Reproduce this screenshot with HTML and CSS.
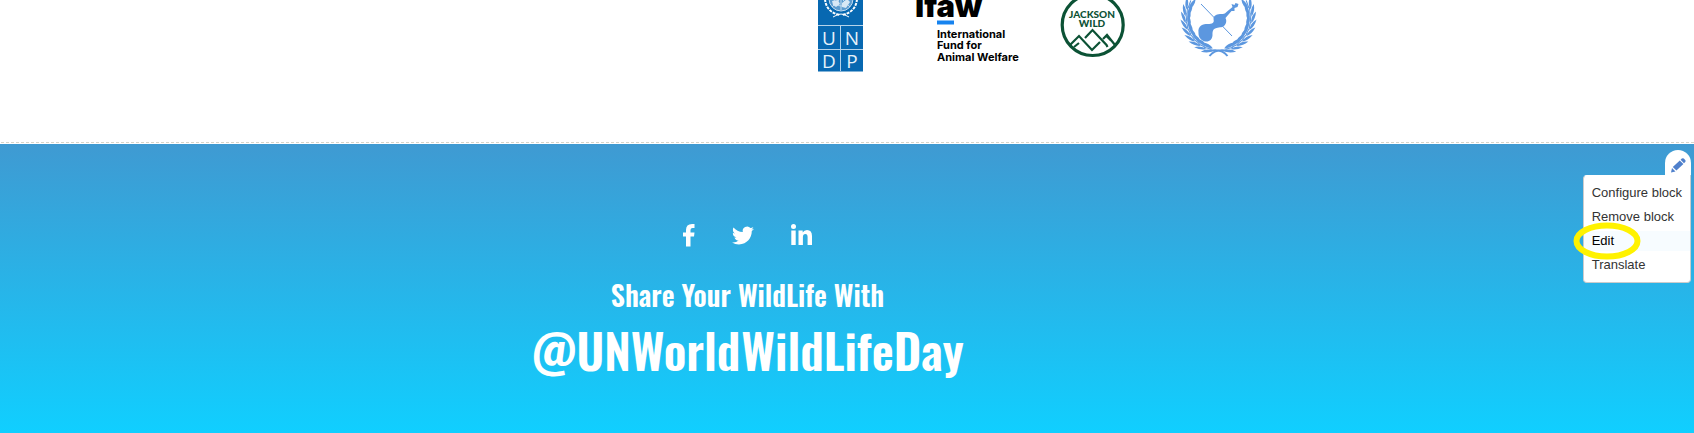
FILE: index.html
```html
<!DOCTYPE html>
<html lang="en">
<head>
<meta charset="utf-8">
<title>World Wildlife Day</title>
<link rel="stylesheet" href="styles.css">
</head>
<body>
<main class="partners">
  <svg class="logo" width="45" height="76" viewBox="818 0 45 76" role="img" aria-label="UNDP">
    <path fill="#0768b1" d="M818 0h45v71.500h-45z"/>
    <g fill="none" stroke="#c3dbef">
      <circle cx="841" cy="-1" r="12" fill="#5b9bcf"/>
      <circle cx="841" cy="-1" r="7"/>
      <path d="M841 0v10M841-2l9 9M841-2l-9 9"/>
      <path stroke="#fff" stroke-width="2" stroke-dasharray="3 1" d="M825-1q1 13 15 16M857-1q-1 13-15 16"/>
      <path stroke="#fff" d="M833 17q5-3 8-3t8 3"/>
      <path fill="#d8e8f5" stroke="none" d="M832 1l6-1 2 4-4 3-3-2zM842 3l5-4 3 3-4 6-4-1z"/>
    </g>
    <path stroke="#b5d3ea" d="M818 25.500h45M818 49.500h45M840.500 25v46"/>
    <g class="undp-letters"><text x="829" y="45">U</text><text x="852" y="45">N</text><text x="829" y="68">D</text><text x="852" y="68">P</text></g>
  </svg>
  <svg class="logo" width="117" height="76" viewBox="903 0 117 76" role="img" aria-label="ifaw International Fund for Animal Welfare">
    <text class="ifaw-name" x="915" y="17">ifaw</text>
    <path fill="#1683ef" d="M937 20.500h17v4h-17z"/>
    <g class="ifaw-text"><text x="937" y="38">International</text><text x="937" y="49">Fund for</text><text x="937" y="61">Animal Welfare</text></g>
  </svg>
  <svg class="logo" width="66" height="76" viewBox="1060 0 66 76" role="img" aria-label="Jackson Wild">
    <g fill="none" stroke="#0c5235">
      <circle cx="1092.700" cy="25" r="30.500" stroke-width="3.200"/>
      <path stroke-width="2.200" d="M1070 45l9-9 13 14 8-8M1074 47l5-4M1085 38l7.500-8 14 15 1 2M1103 39l4-4 8 10M1106 35.500l5 5"/>
    </g>
    <g class="jackson-text"><text x="1092" y="18">JACKSON</text><text x="1092" y="27">WILD</text></g>
  </svg>
  <svg class="logo" width="92" height="76" viewBox="1166 0 92 76" role="img" aria-label="Violin in a laurel wreath">
    <defs>
      <path id="leaves" d="M3 33q-4 4-12 4q5-5 12-4zM2 31q-5-5-12-3q5 4.500 12 3zM1 31.500h-8v1h8z"/>
      <g id="branch">
        <use href="#leaves" transform="rotate(14)"/><use href="#leaves" transform="rotate(26)"/>
        <use href="#leaves" transform="rotate(38)"/><use href="#leaves" transform="rotate(50)"/>
        <use href="#leaves" transform="rotate(62)"/><use href="#leaves" transform="rotate(74)"/>
        <use href="#leaves" transform="rotate(86)"/><use href="#leaves" transform="rotate(98)"/>
        <use href="#leaves" transform="rotate(110)"/>
        <path fill="none" stroke="#5c97df" stroke-width="2" d="M-10 33Q3 30 9 38"/>
      </g>
    </defs>
    <g fill="#5c97df">
      <use href="#branch" transform="translate(1218.500 18)"/>
      <use href="#branch" transform="translate(1218.500 18) scale(-1 1)"/>
      <path d="M1198.500 33c-1-8 5-9 9-9 5 0 7-1 6-5 0-4 4-5 8-5 2 0 3 0 5-2l6-5-1-3 3 1 1-2 3 1-1 3-3 1 0 3-3 0-6 7c1 2 1 4 0 6-2 4-6 3-9 4-4 1-4 4-4 7 0 4-3 7-7 6.500-4-.5-7-4-7-8z"/>
    </g>
    <path stroke="#5c97df" d="M1201 4l31 32"/>
  </svg>
</main>
<footer class="share">
  <nav class="social" aria-label="Social media">
    <a href="#" aria-label="Facebook"><svg width="12" height="23" viewBox="0 0 12 23"><path d="M3 22.500V12.500H0V8.500h3V6q0-6 6-6h2.500v4H9.500Q7.500 4 7.500 6v2.500h4l-.5 4H7.500v10z"/></svg></a>
    <a href="#" aria-label="Twitter"><svg width="22" height="23" viewBox="0 0 24 24"><path d="M23.953 4.570a10 10 0 01-2.825.775 4.958 4.958 0 002.163-2.723c-.951.555-2.005.959-3.127 1.184a4.920 4.920 0 00-8.384 4.482C7.690 8.095 4.067 6.130 1.640 3.162a4.822 4.822 0 00-.666 2.475c0 1.710.870 3.213 2.188 4.096a4.904 4.904 0 01-2.228-.616v.060a4.923 4.923 0 003.946 4.827 4.996 4.996 0 01-2.212.085 4.936 4.936 0 004.604 3.417 9.867 9.867 0 01-6.102 2.105c-.390 0-.779-.023-1.170-.067a13.995 13.995 0 007.557 2.209c9.053 0 13.998-7.496 13.998-13.985 0-.210 0-.420-.015-.630A9.935 9.935 0 0024 4.590z"/></svg></a>
    <a href="#" aria-label="LinkedIn"><svg width="21" height="23" viewBox="0 0 21 23"><circle cx="2.500" cy="2.500" r="2.500"/><path d="M.3 6.500h4.400v14.500H.3zM7.500 6.500h4.200v2Q13 6 16 6q5 0 5 6V21h-4.400v-8q0-3-2.200-3-2.500 0-2.500 3V21H7.500z"/></svg></a>
  </nav>
  <h2 class="lead">Share Your WildLife With</h2>
  <p class="handle">@UNWorldWildLifeDay</p>
  <div class="contextual">
    <button class="trigger" type="button" aria-label="Open configuration options">
      <svg width="15" height="15" viewBox="0 0 15 15"><path d="M0 14.500l1-4.500 3.500 3.500zM1.800 9l7-6.500 3.600 3.600-7 6.500zM9.600 1.800l1.200-1.200q1-.8 2 0l1.400 1.400q.8 1 0 2L13 5.200z"/></svg>
    </button>
    <ul class="menu">
      <li><a href="#">Configure block</a></li>
      <li><a href="#">Remove block</a></li>
      <li><a class="active" href="#">Edit</a></li>
      <li><a href="#">Translate</a></li>
    </ul>
    <svg class="marker" width="68" height="38" viewBox="0 0 68 38"><ellipse cx="34" cy="19" rx="30.500" ry="15.500"/></svg>
  </div>
</footer>
</body>
</html>
```
FILE: styles.css
```css
* { box-sizing: border-box; }
body {
  margin: 0;
  min-height: 100vh;
  display: flex;
  flex-direction: column;
  background: #fff;
  font-family: "Liberation Sans", Arial, sans-serif;
}
.partners {
  display: flex;
  justify-content: center;
  gap: 40px;
  padding: 0 0 68px 382px;
}
.logo { display: block; flex: none; }
.undp-letters { fill: #e6f1fa; font: 19px "Open Sans", sans-serif; text-anchor: middle; }
.ifaw-name { font: 900 31px Inter, sans-serif; }
.ifaw-text { font: 700 11px Inter, sans-serif; }
.jackson-text { fill: #0c5235; font: 900 10px Lato, sans-serif; text-anchor: middle; }
.share {
  position: relative;
  flex: 1;
  display: flex;
  flex-direction: column;
  align-items: center;
  padding: 80px 199px 48px 0;
  background: linear-gradient(#3f9ad2, #10cfff);
  color: #fff;
}
.share::before {
  content: "";
  position: absolute;
  top: -2px;
  left: 0;
  right: 0;
  height: 1px;
  background: repeating-linear-gradient(90deg, #fff 0 1px, #d5d5cb 1px 4px, #fff 4px 5px);
}
.social { display: flex; gap: 37px; }
.social svg { display: block; fill: #fff; }
.lead, .handle {
  margin: 0;
  font-family: Oswald, "Liberation Sans Narrow", "Liberation Sans", sans-serif;
  font-weight: 600;
}
.lead { margin-top: 30px; font-size: 28px; line-height: 36px; }
.handle { margin-top: 7px; font-size: 48px; line-height: 60px; }
.contextual {
  position: absolute;
  top: 6px;
  right: 3px;
  display: flex;
  flex-direction: column;
  align-items: flex-end;
}
.trigger {
  width: 26px;
  height: 25px;
  padding: 5px 0 0 6px;
  border: 0;
  border-radius: 13px 13px 0 0;
  background: #fff;
}
.trigger svg { display: block; fill: #4f80cc; }
.menu {
  margin: 0;
  padding: 5px 0;
  list-style: none;
  border: 1px solid #ccc;
  border-top-color: #fff;
  border-radius: 4px 0 4px 4px;
  background: #fff;
}
.menu a {
  display: block;
  margin: 2px 0 4px;
  padding: 0 8px;
  color: #333;
  font-size: 13px;
  line-height: 20px;
  text-decoration: none;
}
.menu li { display: flow-root; height: 24px; }
.menu .active { color: #000; background: #f7fcff; }
.marker {
  position: absolute;
  top: 72px;
  left: -10px;
  fill: none;
  stroke: #fff200;
  stroke-width: 6px;
  pointer-events: none;
}
```
